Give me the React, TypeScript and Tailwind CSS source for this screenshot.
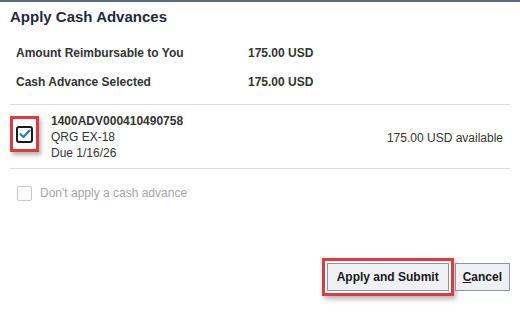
export default function App() {
  return (
    <div
      className="w-[520px] h-[325px] bg-white border-t-2 border-[#5d6b78] overflow-hidden"
      style={{ fontFamily: '"Liberation Sans", Arial, sans-serif' }}
    >
      {/* Header */}
      <div className="px-[10px] pt-[6px]">
        <h1 className="text-[15px] font-bold text-[#1f2b3a] leading-[18px]">Apply Cash Advances</h1>
      </div>

      {/* Summary */}
      <div className="mt-[19px] px-[16px] space-y-[12px] text-[12px] font-bold text-[#333]">
        <div className="flex leading-[17px]">
          <span className="w-[232px]">Amount Reimbursable to You</span>
          <span>175.00 USD</span>
        </div>
        <div className="flex leading-[17px]">
          <span className="w-[232px]">Cash Advance Selected</span>
          <span>175.00 USD</span>
        </div>
      </div>

      {/* Advances list */}
      <div className="mx-[10px] mt-[13px] border-t border-[#dcdcdc]">
        <div className="flex items-start pt-[8px] pb-[7px] border-b border-[#dcdcdc]">
          <div className="mt-[3px] w-[29px] h-[36px] border-[3px] border-[#e0393e] shadow-[2px_3px_4px_rgba(0,0,0,0.3)] flex items-center justify-center">
            <div className="w-[17px] h-[17px] rounded-[3px] border-2 border-[#1a1a1a] flex items-center justify-center">
              <svg width="12" height="10" viewBox="0 0 12 10">
                <path d="M1.5 5.2 L4.5 8 L10.5 1.5" fill="none" stroke="#1f7ad4" strokeWidth="2.2" strokeLinecap="round" strokeLinejoin="round" />
              </svg>
            </div>
          </div>
          <div className="ml-[12px] flex-1 text-[12px] text-[#333] leading-[16px]">
            <div className="font-bold">1400ADV000410490758</div>
            <div>QRG EX-18</div>
            <div>Due 1/16/26</div>
          </div>
          <div className="mt-[16px] mr-[7px] text-[12px] text-[#333]">175.00 USD available</div>
        </div>

        <label className="flex items-center mt-[15px] ml-[7px]">
          <span className="w-[15px] h-[15px] rounded-[2px] border border-[#c8c8c8] bg-white" />
          <span className="ml-[8px] text-[12px] text-[#a6a6a6]">Don't apply a cash advance</span>
        </label>
      </div>

      {/* Footer buttons */}
      <div className="flex justify-end items-center mt-[56px] pr-[10px]">
        <div className="border-[3px] border-[#e0393e] p-[2px] shadow-[2px_3px_5px_rgba(0,0,0,0.3)]">
          <button className="h-[28px] px-[9px] bg-[#eef0f2] border border-[#8a96a3] text-[12px] font-bold text-[#1a1a1a]">
            Apply and Submit
          </button>
        </div>
        <button className="ml-[1px] h-[28px] px-[7px] bg-[#eef0f2] border border-[#8a96a3] text-[12px] font-bold text-[#1a1a1a]">
          <span className="underline">C</span>ancel
        </button>
      </div>
    </div>
  );
}
